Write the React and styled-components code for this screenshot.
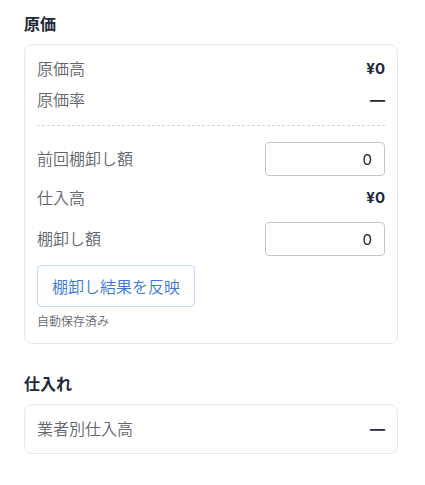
import React from "react";
import styled, { createGlobalStyle } from "styled-components";

const GlobalStyle = createGlobalStyle`
  body {
    margin: 0;
    background: #ffffff;
    font-family: Inter, "Noto Sans CJK JP", sans-serif;
  }
`;

const App = () => {
  return (
    <>
      <GlobalStyle />
      <Page>
        <Section>
          <Heading>原価</Heading>
          <Card>
            <Row>
              <Label>原価高</Label>
              <Value>¥0</Value>
            </Row>
            <Row $top={7}>
              <Label>原価率</Label>
              <Value>—</Value>
            </Row>
            <Divider />
            <Row $top={0}>
              <Label>前回棚卸し額</Label>
              <NumberInput type="text" defaultValue="0" />
            </Row>
            <Row $top={10}>
              <Label>仕入高</Label>
              <Value>¥0</Value>
            </Row>
            <Row $top={12}>
              <Label>棚卸し額</Label>
              <NumberInput type="text" defaultValue="0" />
            </Row>
            <ApplyButton>棚卸し結果を反映</ApplyButton>
            <SavedNote>自動保存済み</SavedNote>
          </Card>
        </Section>
        <Section $top={28}>
          <Heading>仕入れ</Heading>
          <Card>
            <Row>
              <Label>業者別仕入高</Label>
              <Value>—</Value>
            </Row>
          </Card>
        </Section>
      </Page>
    </>
  );
};

export default App;

const Page = styled.main`
  width: 374px;
  padding: 12px 0 0 24px;
`;

const Section = styled.section`
  margin-top: ${(p) => p.$top || 0}px;
`;

const Heading = styled.h2`
  margin: 0 0 8px;
  font-size: 16px;
  line-height: 24px;
  font-weight: 700;
  color: #1e293b;
`;

const Card = styled.div`
  display: flex;
  flex-direction: column;
  align-items: flex-start;
  padding: 12px;
  border: 1px solid #e5e7eb;
  border-radius: 8px;
  background: #ffffff;
`;

const Row = styled.div`
  display: flex;
  align-items: center;
  justify-content: space-between;
  align-self: stretch;
  min-height: 24px;
  margin-top: ${(p) => p.$top || 0}px;
`;

const Label = styled.span`
  font-size: 16px;
  line-height: 24px;
  font-weight: 350;
  color: #62666d;
`;

const Value = styled.span`
  font-size: 15px;
  line-height: 24px;
  font-weight: 700;
  color: #1e293b;
`;

const Divider = styled.hr`
  align-self: stretch;
  margin: 13px 0 16px;
  border: none;
  border-top: 1px dashed #d4d7dc;
`;

const NumberInput = styled.input`
  box-sizing: border-box;
  width: 120px;
  height: 34px;
  padding: 0 12px;
  border: 1px solid #c4c6ca;
  border-radius: 4px;
  font-family: Inter, "Noto Sans CJK JP", sans-serif;
  font-size: 15px;
  color: #222222;
  text-align: right;
  outline: none;
`;

const ApplyButton = styled.button`
  margin-top: 9px;
  height: 42px;
  padding: 0 14px;
  border: 1px solid #c3dafb;
  border-radius: 4px;
  background: #ffffff;
  color: #3b78d8;
  font-family: Inter, "Noto Sans CJK JP", sans-serif;
  font-size: 16px;
  font-weight: 350;
  cursor: pointer;
`;

const SavedNote = styled.p`
  margin: 6px 0 0;
  font-size: 12px;
  line-height: 18px;
  font-weight: 350;
  color: #62666d;
`;
